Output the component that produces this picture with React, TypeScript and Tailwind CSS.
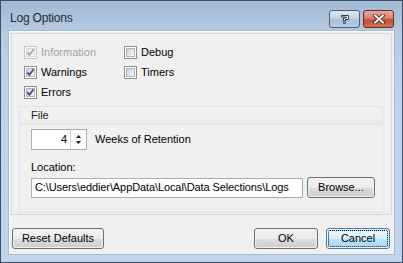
import React from 'react'

const font = "font-['Liberation_Sans',Arial,sans-serif]"

function CheckBox({ label, checked, disabled }: { label: string; checked?: boolean; disabled?: boolean }) {
  return (
    <div className="flex items-center h-[20px]">
      <span
        className={`flex-none w-[13px] h-[13px] border p-[1px] bg-white ${
          disabled ? 'border-[#c4c4c4]' : 'border-[#8e8f8f]'
        }`}
      >
        <span
          className={`relative block w-full h-full border bg-gradient-to-br ${
            disabled
              ? 'border-[#dadada] from-[#e6e6e6] to-[#f7f7f7]'
              : 'border-[#b0b4ba] from-[#cdd1d7] to-[#f8f8f8]'
          }`}
        >
          {checked && (
            <svg viewBox="0 0 9 9" className="absolute -left-[1px] -top-[1px] w-[9px] h-[9px]">
              <path
                d="M1.3 4.4 L3.4 6.8 L7.6 1.3"
                fill="none"
                stroke={disabled ? '#a3a3a3' : '#3a4f86'}
                strokeWidth="1.7"
              />
            </svg>
          )}
        </span>
      </span>
      <span className={`ml-[4px] leading-[13px] ${disabled ? 'text-[#a0a0a0]' : 'text-black'}`}>{label}</span>
    </div>
  )
}

function Button({ children, width, isDefault }: { children: React.ReactNode; width: string; isDefault?: boolean }) {
  return (
    <button
      className={`${width} h-[21px] rounded-[3px] border p-[1px] flex-none ${
        isDefault ? 'border-[#3c7fb1]' : 'border-[#707070]'
      }`}
    >
      <span
        className={`flex items-center justify-center w-full h-full rounded-[2px] ${
          isDefault
            ? 'bg-[linear-gradient(#eaf6fd_0%,#d9f0fc_50%,#bee6fd_51%,#a7d9f5_100%)] border border-dotted border-black'
            : 'bg-[linear-gradient(#f2f2f2_0%,#ebebeb_50%,#dddddd_51%,#cfcfcf_100%)]'
        }`}
      >
        <span className="leading-[13px] text-black">{children}</span>
      </span>
    </button>
  )
}

export default function App() {
  return (
    <div
      className={`${font} text-[11px] w-[403px] h-[263px] border border-[#3d4f66] flex flex-col bg-[linear-gradient(#a2bad4_0%,#b7cde5_14%,#bed3ea_40%,#c0d5eb_100%)]`}
    >
      {/* title bar */}
      <div className="h-[29px] flex-none flex items-start pl-[9px] pr-[8px]">
        <span className="mt-[11px] leading-[13px] text-[#1b2b3c] text-[12px] tracking-[-0.2px]">Log Options</span>
        <div className="ml-auto mt-[9px] flex gap-[3px]">
          <div className="w-[31px] h-[18px] rounded-[3px] border border-[#4a5e78] bg-[linear-gradient(#dfe8f2_0%,#c4d3e4_45%,#a9bdd5_55%,#b9cde2_100%)] flex items-center justify-center">
            <svg viewBox="0 0 10 10" className="w-[10px] h-[10px]">
              <path d="M1.5 1.5h7v4h-3v1.5h-2v-3h3v-1h-5z" fill="#fff" stroke="#2e3b4d" strokeWidth="1" />
              <path d="M3.5 8h2v1.5h-2z" fill="#fff" stroke="#2e3b4d" strokeWidth="0.8" />
            </svg>
          </div>
          <div className="w-[31px] h-[18px] rounded-[3px] border border-[#6b2a22] bg-[linear-gradient(#e9a99c_0%,#d9826f_45%,#c44c36_55%,#d0724f_100%)] flex items-center justify-center">
            <svg viewBox="0 0 14 10" className="w-[14px] h-[10px]">
              <path d="M3 1.5 L11 8.5 M11 1.5 L3 8.5" stroke="#3b1a14" strokeWidth="3.6" strokeLinecap="square" />
              <path d="M3 1.5 L11 8.5 M11 1.5 L3 8.5" stroke="#fff" strokeWidth="2" strokeLinecap="square" />
            </svg>
          </div>
        </div>
      </div>

      {/* client area */}
      <div className="mx-[7px] mb-[7px] flex-1 flex flex-col border border-[#a7bbd1] bg-[#f0f0f0] shadow-[inset_1px_1px_0_#fbfbfb]">
        <div className="mx-[2px] mt-[2px] h-[182px] flex-none border border-[#d9d9d9] bg-[#f0f0f0] px-[7px] pt-[8px] flex flex-col">
          <div className="ml-[5px] flex">
            <div className="w-[100px] flex flex-col">
              <CheckBox label="Information" checked disabled />
              <CheckBox label="Warnings" checked />
              <CheckBox label="Errors" checked />
            </div>
            <div className="flex flex-col">
              <CheckBox label="Debug" />
              <CheckBox label="Timers" />
            </div>
          </div>

          {/* File group */}
          <div className="mt-[4px] mr-[1px] h-[107px] border border-[#dfe3e7] bg-[#f0f0f0] flex flex-col">
            <div className="h-[18px] flex-none pl-[11px] flex items-center bg-[linear-gradient(#f0f0f0_0%,#f0f0f0_70%,#e7e7e7_100%)] border-b border-[#e4e4e4]">
              <span className="leading-[13px] text-[#1f1f1f]">File</span>
            </div>
            <div className="pl-[11px] pr-[7px] pt-[4px] flex flex-col">
              <div className="flex items-center">
                <div className="w-[56px] h-[21px] border border-[#abadb3] bg-white flex">
                  <div className="flex-1 flex items-center justify-end pr-[3px]">
                    <span className="leading-[13px]">4</span>
                  </div>
                  <div className="w-[16px] border-l border-[#d5d5d5] flex flex-col items-center justify-center gap-[3px]">
                    <svg viewBox="0 0 5 3" className="w-[5px] h-[3px]">
                      <path d="M2.5 0 L5 3 L0 3z" fill="#1e1e1e" />
                    </svg>
                    <svg viewBox="0 0 5 3" className="w-[5px] h-[3px]">
                      <path d="M0 0 L5 0 L2.5 3z" fill="#1e1e1e" />
                    </svg>
                  </div>
                </div>
                <span className="ml-[8px] leading-[13px]">Weeks of Retention</span>
              </div>
              <span className="mt-[11px] leading-[13px]">Location:</span>
              <div className="mt-[3px] flex items-center">
                <div className="w-[272px] h-[20px] border border-[#abadb3] bg-white flex items-center pl-[3px] overflow-hidden">
                  <span className="leading-[13px] whitespace-nowrap tracking-[-0.1px]">
                    C:\Users\eddier\AppData\Local\Data Selections\Logs
                  </span>
                </div>
                <div className="ml-[4px]">
                  <Button width="w-[68px]">Browse...</Button>
                </div>
              </div>
            </div>
          </div>
        </div>

        {/* bottom buttons */}
        <div className="mt-[13px] pl-[3px] pr-[4px] flex">
          <Button width="w-[92px]">Reset Defaults</Button>
          <div className="ml-auto flex gap-[8px]">
            <Button width="w-[64px]">OK</Button>
            <Button width="w-[64px]" isDefault>
              Cancel
            </Button>
          </div>
        </div>
      </div>
    </div>
  )
}
